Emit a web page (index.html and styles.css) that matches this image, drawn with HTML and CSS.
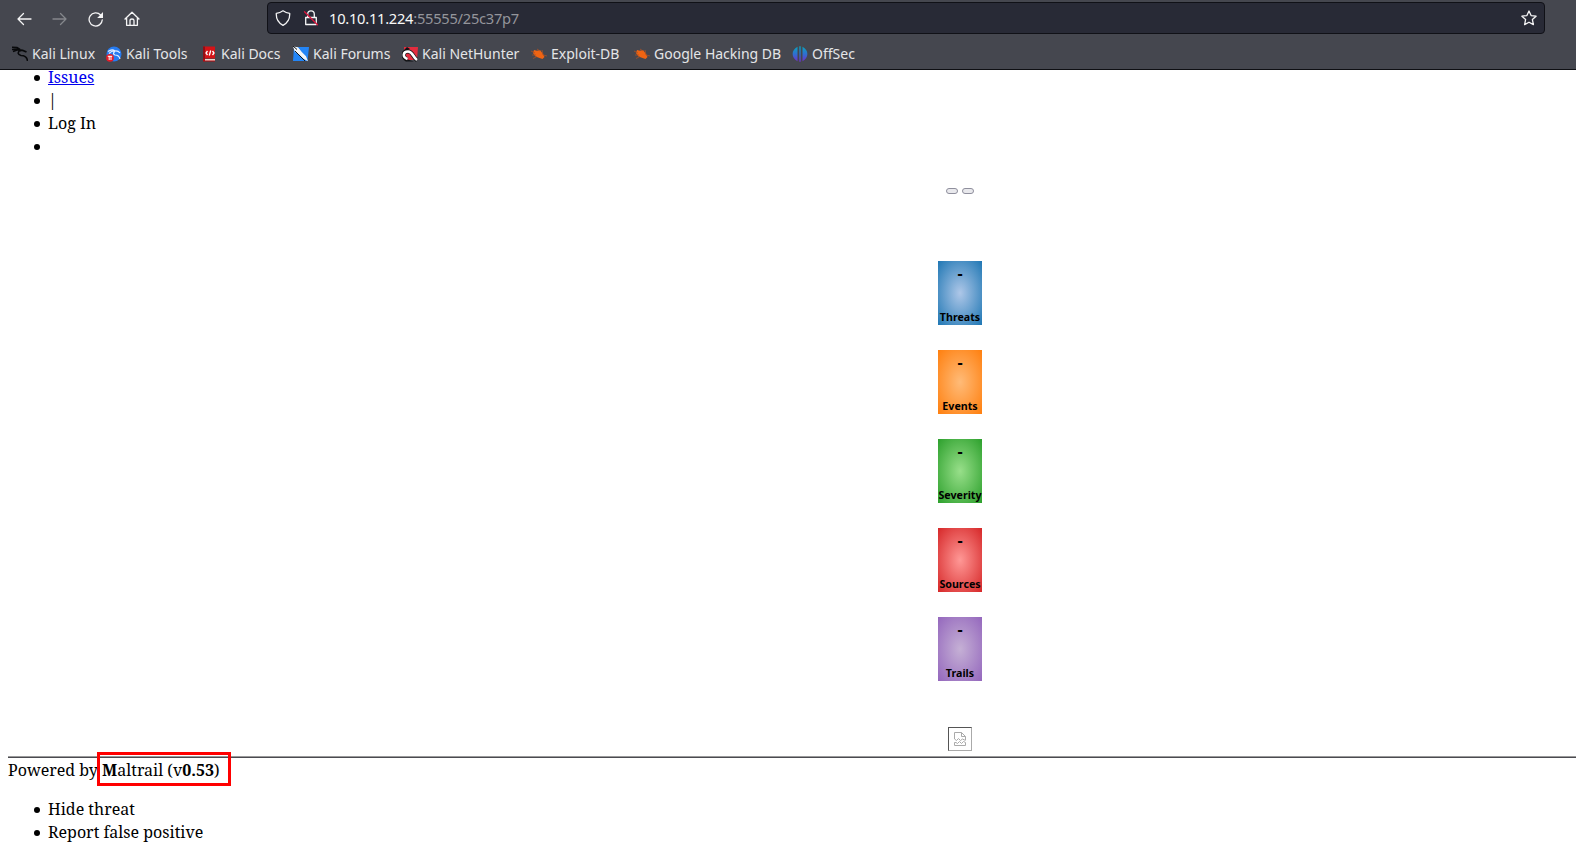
FILE: index.html
```html
<!DOCTYPE html>
<html lang="en">
<head>
<meta charset="utf-8">
<title>Maltrail</title>
<link rel="stylesheet" href="styles.css">
</head>
<body>
<header class="browser">
  <div class="toolbar">
    <nav class="controls">
      <svg class="icon" viewBox="0 0 16 16"><path d="M15 8H2M7.500 2.500L2 8l5.500 5.500"/></svg>
      <svg class="icon disabled" viewBox="0 0 16 16"><path d="M1 8h13M8.500 2.500L14 8l-5.500 5.500"/></svg>
      <svg class="icon" viewBox="0 0 16 16"><path d="M14.3 8.8A6.6 6.6 0 1 1 12.6 4"/><path class="solid" d="M15 1v6H9.2z"/></svg>
      <svg class="icon" viewBox="0 0 16 16"><path d="M1 8l7-6.8L15 8M2.6 7v7.3h10.8V7M6 14V9.5Q6 8 8 8t2 1.500V14"/></svg>
    </nav>
    <div class="address">
      <svg class="icon" viewBox="0 0 16 16"><path d="M8 .8Q11 3 14.7 3.300C15 9 12.500 13 8 15.300C3.500 13 1 9 1.300 3.300Q5 3 8 .8z"/></svg>
      <svg class="icon" viewBox="0 0 16 16"><path d="M4.700 7V4.200a3.300 3.300 0 0 1 6.600 0V7M2.700 7.500h10.600v7H2.700z"/><path class="strike" d="M1.500 1.800l13 13"/></svg>
      <span class="url"><span class="host">10.10.11.224</span>:55555/25c37p7</span>
      <svg class="icon star" viewBox="0 0 16 16"><path d="M8 1l2.100 4.600 5 .6-3.700 3.400 1 5L8 12.200l-4.400 2.400 1-5L.9 6.200l5-.6z"/></svg>
    </div>
  </div>
  <nav class="bookmarks">
    <span class="bookmark"><svg class="fav" viewBox="0 0 16 16"><path d="M0 1.200L5 1.500 8 3.500M0 3.500l5-.5 4 2M1 5.500l4-1.500M5 4Q10 3.500 14.500 6M8 4Q4 8 9 9.500Q15 9.500 15.500 15" stroke="#08090b" stroke-width="1.600" fill="none"/></svg><span class="label">Kali Linux</span></span>
    <span class="bookmark"><svg class="fav" viewBox="0 0 16 16"><circle cx="8" cy="8" r="7.500" fill="#267bf1"/><path d="M2 5.500Q6 2.500 9 5q3-.5 5 2M3 7.500Q6 4.500 9 5Q6 8 9 9q4 0 5 4" stroke="#e4efff" stroke-width="1.200" fill="none"/><circle cx="4" cy="11.800" r="3.900" fill="#e51d29"/><path d="M1.800 10.300h4.400M3.200 10v4M5 10v4" stroke="#fff"/></svg><span class="label">Kali Tools</span></span>
    <span class="bookmark"><svg class="fav" viewBox="0 0 16 16"><path d="M2 .5h12v12H2z" fill="#d51317"/><path d="M2 .5h2v13H2z" fill="#8f1015"/><path d="M2 13h12v2.500H2z" fill="#b9090e"/><path d="M4 13h10v1.500H4z" fill="#e9d8d0"/><path d="M6.500 5L5 7l1.500 2M11.500 5L13 7l-1.500 2M9.700 4.500L8.300 9.500" fill="none" stroke="#fff" stroke-width="1.300"/></svg><span class="label">Kali Docs</span></span>
    <span class="bookmark"><svg class="fav" viewBox="0 0 16 16"><path d="M1 1h15l-1.500 14H0z" fill="#2385f6"/><path d="M0 .5l5 .7 4 5 4 4 2 5-4.500-2.500L6 8.500 2 6z" fill="#f4f6f7"/><path d="M0 0l4 3.500M2 5l5 5 5 5" stroke="#151719" fill="none"/></svg><span class="label">Kali Forums</span></span>
    <span class="bookmark"><svg class="fav" viewBox="0 0 16 16"><path d="M2 1h14l-1 13H2z" fill="#e32c3e"/><path d="M0 6l5-5 3 2-4 2zM1 12l3 3.500h8z" fill="#101216"/><path d="M5 13.500C0 11 1 5.500 6 5.500S11 12 15 14" stroke="#111" stroke-width="4.200" fill="none"/><path d="M5.500 13C0 11 1 5.500 6 5.500S11 11.500 15 14" stroke="#fff" stroke-width="2.600" fill="none"/></svg><span class="label">Kali NetHunter</span></span>
    <span class="bookmark"><svg class="fav" viewBox="0 0 16 16"><path d="M3 4l3 .8L9 4l3 4 1.500 3-2 2-3-1-4-1.500L2 7z" fill="#f06412"/><path d="M0 5l4 2M1 9l4 0M2 12.500l4-2M6 3l3 2M11 4l1 5 4 1" stroke="#a95025" fill="none" stroke-width=".8"/></svg><span class="label">Exploit-DB</span></span>
    <span class="bookmark"><svg class="fav" viewBox="0 0 16 16"><path d="M3 4l3 .8L9 4l3 4 1.500 3-2 2-3-1-4-1.500L2 7z" fill="#f06412"/><path d="M0 5l4 2M1 9l4 0M2 12.500l4-2M6 3l3 2M11 4l1 5 4 1" stroke="#a95025" fill="none" stroke-width=".8"/></svg><span class="label">Google Hacking DB</span></span>
    <span class="bookmark"><svg class="fav" viewBox="0 0 16 16"><defs><linearGradient id="off" x2="0" y2="1"><stop stop-color="#08a5bc"/><stop offset=".5" stop-color="#2e70d0"/><stop offset="1" stop-color="#702dcc"/></linearGradient></defs><path d="M5.500.8v14.400C-1 12-1 4 5.500.8zM10.500.8v14.400C17 12 17 4 10.500.8zM7.300.3h1.400v15.400H7.300z" fill="url(#off)"/></svg><span class="label">OffSec</span></span>
  </nav>
</header>
<main class="page">
  <ul class="list menu">
    <li class="item"><a class="link" href="#">Issues</a></li>
    <li class="item">|</li>
    <li class="item">Log In</li>
    <li class="item"></li>
  </ul>
  <section class="center">
    <div class="pills"><button class="pill" aria-label="Previous"></button><button class="pill" aria-label="Next"></button></div>
    <div class="cards">
      <div class="card threats"><span class="value">-</span><span class="name">Threats</span></div>
      <div class="card events"><span class="value">-</span><span class="name">Events</span></div>
      <div class="card severity"><span class="value">-</span><span class="name">Severity</span></div>
      <div class="card sources"><span class="value">-</span><span class="name">Sources</span></div>
      <div class="card trails"><span class="value">-</span><span class="name">Trails</span></div>
    </div>
    <div class="broken"><svg class="broken-icon" viewBox="0 0 12 14"><path d="M.5 7V.5h7l4 4V8M7.500.5v4h4M.5 7l2 1.500 2-2 2 2 2-1.500 3 1.500M.5 10.500v3h11v-3l-2-1-2 2-2-2-2 2-1.500-1z"/></svg></div>
  </section>
  <footer class="footer">
    <div class="powered"><span>Powered by</span> <span class="product"><b>M</b>altrail (v<b>0.53</b>)<span class="highlight"></span></span></div>
    <ul class="list actions">
      <li class="item">Hide threat</li>
      <li class="item">Report false positive</li>
    </ul>
  </footer>
</main>
</body>
</html>
```
FILE: styles.css
```css
* { box-sizing: border-box; }
body { margin: 0; height: 856px; overflow: hidden; background: #fff; color: #000; font: 16px/23px "Noto Serif", "DejaVu Serif", serif; }
.browser { height: 70px; background: #45474f; border-bottom: 1px solid #0e0f13; font-family: "Noto Sans", sans-serif; color: #e4e5e7; }
.toolbar { display: flex; height: 36px; padding-top: 2px; }
.controls { display: flex; gap: 20px; padding: 8.5px 0 0 15.5px; width: 267px; }
.icon { width: 16px; height: 16px; flex: none; fill: none; stroke: #f5f5f6; stroke-width: 1.3; stroke-linejoin: round; stroke-linecap: round; }
.icon .solid { fill: #f5f5f6; stroke: none; }
.icon .strike { stroke: #dc143c; }
.disabled { stroke: #85878c; }
.address { display: flex; align-items: center; width: 1278px; height: 32px; padding: 0 7px; gap: 12px; background: #282a36; border: 1px solid #101117; border-radius: 4px; }
.url { margin-left: -2px; font-size: 14.67px; letter-spacing: -.25px; color: #94959b; }
.host { color: #f8f8f8; }
.star { margin-left: auto; }
.bookmarks { display: grid; grid-template-columns: 94px 95px 92px 109px 129px 103px 158px 80px; padding: 6px 0 0 12px; height: 33px; font-size: 14px; }
.bookmark { display: flex; align-items: center; gap: 4px; height: 24px; white-space: nowrap; }
.label { margin-top: -2px; }
.fav { width: 16px; height: 16px; flex: none; }
.page { height: 786px; padding-left: 8px; overflow: hidden; }
.list { margin: 0; padding-left: 26px; list-style: none; }
.item { display: flex; align-items: center; gap: 8px; height: 23px; }
.item::before { content: ""; width: 6px; height: 6px; border-radius: 50%; background: #000; }
.menu { margin-top: -4px; }
.link { color: #0000ee; text-decoration: underline; }
.center { display: flex; flex-direction: column; align-items: center; width: 1904px; }
.pills { display: flex; gap: 4px; margin-top: 30px; }
.pill { width: 12px; height: 6px; padding: 0; border: 1px solid #8f8f9d; border-radius: 3px; background: #e9e9ed; }
.cards { display: flex; flex-direction: column; gap: 25px; margin-top: 67px; }
.card { display: flex; flex-direction: column; align-items: center; justify-content: space-between; width: 44px; height: 64px; padding: 2px 0; font-family: "Noto Sans", sans-serif; font-weight: 700; }
.value { font-size: 16px; line-height: 20px; }
.name { font-size: 10.67px; line-height: 12px; }
.threats { background: radial-gradient(#aec7e8, #1f77b4); }
.events { background: radial-gradient(#ffbb78, #ff7f0e); }
.severity { background: radial-gradient(#98df8a, #2ca02c); }
.sources { background: radial-gradient(#ff9896, #d62728); }
.trails { background: radial-gradient(#c5b0d5, #9467bd); }
.broken { display: flex; align-items: center; justify-content: center; width: 24px; height: 24px; margin-top: 46px; border: 1px solid; border-color: #555 #aaa #aaa #555; }
.broken-icon { width: 12px; height: 14px; fill: none; stroke: #aaa; }
.footer { margin-top: 5px; border-top: 1px solid #9a9a9a; }
.powered { height: 24px; margin: 0 0 16px; padding-top: 1px; border-top: 1px solid #4a4a50; white-space: nowrap; }
.actions { padding-top: 1px; }
.product { position: relative; }
.highlight { position: absolute; left: -5px; top: -7px; width: 134px; height: 34px; border: 3px solid #f00; }
```
